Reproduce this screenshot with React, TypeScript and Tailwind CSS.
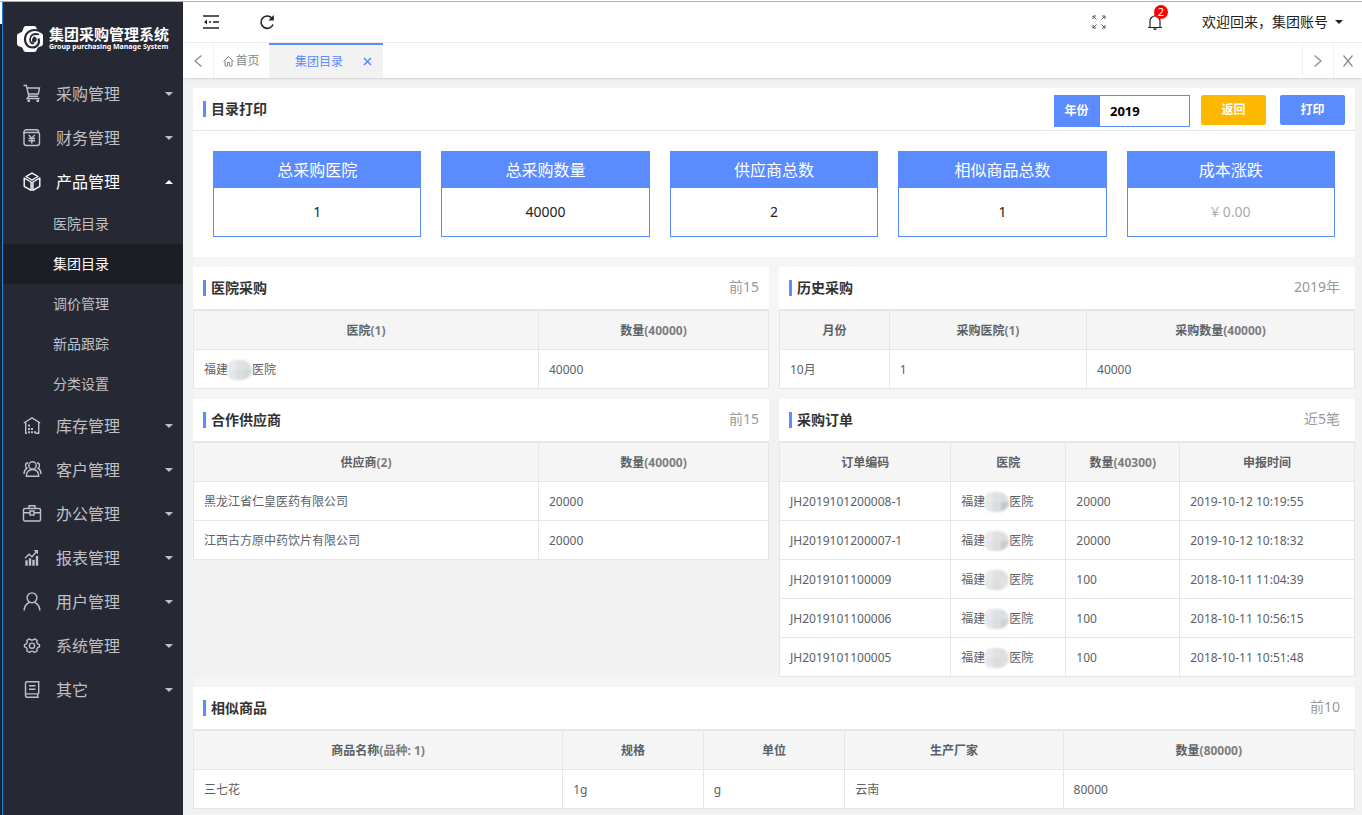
import { useState } from "react";
import type { ReactNode } from "react";

interface MenuItem {
  name: string;
  icon: ReactNode;
  children?: string[];
}

interface Column {
  title: string;
  note?: string;
  width?: string;
}

function Icon({ children }: { children: ReactNode }) {
  return (
    <svg width="20" height="20" viewBox="0 0 20 20" fill="none" stroke="currentColor" strokeWidth="1.4" className="w-5 h-5 shrink-0">
      {children}
    </svg>
  );
}

const menu: MenuItem[] = [
  {
    name: "采购管理",
    icon: (
      <Icon>
        <path d="M1.500 1.500h2.900l2.400 10.700h9.200M4.800 4h12.700l-1.200 6H6.300M6.800 12.200l-1.600 2.300h12.300" />
        <path d="M5.500 15.500h2.500V18H5.500zM14.500 15.500H17V18h-2.500z" fill="currentColor" stroke="none" />
      </Icon>
    ),
  },
  {
    name: "财务管理",
    icon: (
      <Icon>
        <path d="M2 6V4a2.300 2.300 0 0 1 2.300-2.300h10A2.300 2.300 0 0 1 16.600 4" />
        <path d="M2 4.500h13.500a2 2 0 0 1 2 2V15a2.500 2.500 0 0 1-2.500 2.500H4.500A2.500 2.500 0 0 1 2 15z" />
        <path d="M6.800 7l3 3.200L12.800 7M6.500 10.500h6.600M6.500 12.800h6.600M9.800 10.200v5.300" />
      </Icon>
    ),
  },
  {
    name: "产品管理",
    icon: (
      <Icon>
        <path d="M10 1.200l6 3.300-6 3.500-6-3.500zM2.200 6l6.900 4v8.300l-6.900-4zM17.800 6l-6.900 4v8.300l6.900-4z" strokeLinejoin="round" />
      </Icon>
    ),
    children: ["医院目录", "集团目录", "调价管理", "新品跟踪", "分类设置"],
  },
  {
    name: "库存管理",
    icon: (
      <Icon>
        <path d="M1.800 7L10 1.800 18.200 7M3.700 6v11.300M3 17.300h2M13.500 17.300h3.200V6" />
        <path d="M6 8.500h2v2H6zM6 12h2v2H6zM9 12h2v2H9zM6 15.300h2v2H6zM9 15.300h2v2H9zM12 15.300h2v2h-2z" fill="currentColor" stroke="none" />
      </Icon>
    ),
  },
  {
    name: "客户管理",
    icon: (
      <Icon>
        <circle cx="10.500" cy="5.500" r="3.700" />
        <path d="M4.300 16.300c0-4.300 2.400-6.800 6.200-6.800s6.200 2.500 6.200 6.800zM6.200 2.800C3 2.800 2.800 7 4.900 8.200 2.900 9.300 2.100 11 2 14M14.800 2.800c3.200 0 3.400 4.200 1.300 5.400 2 1.100 2.800 2.800 2.900 5.800" />
      </Icon>
    ),
  },
  {
    name: "办公管理",
    icon: (
      <Icon>
        <rect x="1.500" y="4.500" width="17" height="12.500" rx="1.500" />
        <path d="M7 4.500V1.700h6v2.800M1.500 8.700H8M12 8.700h6.500M8 7h4v4H8z" />
      </Icon>
    ),
  },
  {
    name: "报表管理",
    icon: (
      <Icon>
        <path d="M3.500 12.500h2v5h-2zM7 10.500h2v7H7zM10.500 12h2v5.500h-2zM14 8h2v9.500h-2z" fill="currentColor" strokeWidth=".4" />
        <path d="M3 10.200l4-4 3 2.500 5-5.700" />
        <path d="M11.500 2H16v4.500z" fill="currentColor" stroke="none" />
      </Icon>
    ),
  },
  {
    name: "用户管理",
    icon: (
      <Icon>
        <circle cx="10" cy="5.800" r="4.900" />
        <path d="M2.200 18.500c0-4 2-6.500 5-8M17.800 18.500c0-4-2-6.500-5-8" />
      </Icon>
    ),
  },
  {
    name: "系统管理",
    icon: (
      <Icon>
        <path d="M7.500 2.900L8.900 4h2.200l1.400-1.100 2.600 1.500-.3 1.900 1.100 1.800 1.600.5v2.200l-1.600.6-1.100 1.800.3 1.800-2.600 1.500-1.400-1.100H8.900l-1.400 1.100L4.900 15l.3-1.800-1.100-1.800-1.600-.6V8.600l1.600-.5 1.100-1.800-.3-1.900z" strokeLinejoin="round" />
        <circle cx="10" cy="9.700" r="2.600" />
      </Icon>
    ),
  },
  {
    name: "其它",
    icon: (
      <Icon>
        <path d="M16.700 13.700V1.700H5A1.500 1.500 0 0 0 3.500 3.200v12.600A1.500 1.500 0 0 0 5 17.300h11.700M3.500 15.300A1.500 1.500 0 0 1 5 13.900h11.700M15.700 14v3.300M7 5.700h6.500M7 9.200h6.500" />
      </Icon>
    ),
  },
];

const stats = [
  { label: "总采购医院", value: "1" },
  { label: "总采购数量", value: "40000" },
  { label: "供应商总数", value: "2" },
  { label: "相似商品总数", value: "1" },
  { label: "成本涨跌", value: "¥ 0.00", muted: true },
];

// Hospital name with its middle characters masked out
function Hospital({ mask = "bg-[#cfd2d6]" }: { mask?: string }) {
  return (
    <span className="inline-flex items-center">
      福建
      <span className="w-6 h-5 grid grid-cols-3 rounded-l-md rounded-r-[10px] overflow-hidden blur-[1px]">
        <span className="bg-[#e9e9ea]" />
        <span className="bg-[#dfe1e2]" />
        <span className="bg-[#dcdee1]" />
        <span className="bg-[#e4e5e6]" />
        <span className="bg-[#dadcdd]" />
        <span className={mask} />
      </span>
      医院
    </span>
  );
}

function DataTable({ columns, rows }: { columns: Column[]; rows: ReactNode[][] }) {
  return (
    <table className="w-full table-fixed border-collapse bg-white text-xs text-[#5b5f66]">
      <thead>
        <tr className="h-[39px] bg-[#f5f5f5]">
          {columns.map((col) => (
            <th key={col.title} scope="col" className={`border border-[#e6e6e6] px-2.5 pt-0.5 font-bold text-center ${col.width ?? ""}`}>
              {col.title}
              {col.note && <span className="text-[#7d7d7d]">({col.note})</span>}
            </th>
          ))}
        </tr>
      </thead>
      <tbody>
        {rows.map((row, i) => (
          <tr key={i} className="h-[39px]">
            {row.map((cell, j) => (
              <td key={j} className="border border-[#e6e6e6] px-2.5 pt-0.5 pb-0">{cell}</td>
            ))}
          </tr>
        ))}
      </tbody>
    </table>
  );
}

function PanelTitle({ title, children }: { title: string; children?: ReactNode }) {
  return (
    <div className="h-[43px] flex items-center justify-between border-b border-[#e6e6e6] bg-white px-2.5">
      <h2 className="h-4 flex items-center border-l-3 border-[#5a8bff] pl-[5px] text-sm font-bold text-[#333]">{title}</h2>
      {children}
    </div>
  );
}

interface PanelProps {
  title: string;
  extra: string;
  extraClass?: string;
  columns: Column[];
  rows: ReactNode[][];
}

function Panel({ title, extra, extraClass = "pr-[5px]", columns, rows }: PanelProps) {
  return (
    <section>
      <PanelTitle title={title}>
        <span className={`pb-0.5 text-sm text-[#999] ${extraClass}`}>{extra}</span>
      </PanelTitle>
      <DataTable columns={columns} rows={rows} />
    </section>
  );
}

function Caret({ up = false }: { up?: boolean }) {
  return (
    <svg width="8" height="4" viewBox="0 0 8 4" fill="currentColor">
      <path d={up ? "M0 4l4-4 4 4z" : "M0 0h8L4 4z"} />
    </svg>
  );
}

function Sidebar() {
  const [open, setOpen] = useState("产品管理");
  const [active, setActive] = useState("集团目录");

  return (
    <aside className="w-[180px] shrink-0 bg-[#262834] text-[#c0c1c5]">
      <div className="h-[70px] flex items-center gap-1.5 pl-3.5 pt-1 text-white">
        <svg width="26" height="26" viewBox="0 0 26 26" fill="none" className="shrink-0">
          <path d="M9 0h8q2.500 0 3 4 1.500 2.500 4 3 2 .5 2 2.500v8q0 2.500-3 3-2.500.5-3 2.500-.5 3-3 3H9q-2.500 0-3-3-.5-2-3-2.500-3-.5-3-3v-8Q0 7.500 2.500 7 5.500 6.500 6 4 6.500 0 9 0z" fill="currentColor" />
          <path d="M21.500 4.500C13 2.500 8 7 8 13.500c0 4.500 3 8 7.500 8 4.800 0 7.500-4 6-9" stroke="#262834" strokeWidth="2.200" />
          <path d="M22 8.500C16 6.800 13 10 13 13.500c0 3 2 4.300 4 3.800" stroke="#262834" strokeWidth="1.800" />
          <path d="M17 10.500c3 .5 3.500 3.500 1.500 5.500-1.500 1.200-3.500.5-3.500-1.500s1-3.200 2-4z" fill="#262834" />
        </svg>
        <div className="whitespace-nowrap">
          <p className="text-[15px] leading-4 font-bold">集团采购管理系统</p>
          <p className="text-[7px] leading-[10px] font-bold">Group purchasing Manage System</p>
        </div>
      </div>
      <nav>
        {menu.map((item) => (
          <div key={item.name}>
            <button
              onClick={() => setOpen(open === item.name ? "" : item.name)}
              className={`w-full h-11 flex items-center pl-[19px] pr-2.5 text-base ${open === item.name ? "text-white" : ""}`}
            >
              {item.icon}
              <span className="flex-1 pl-3.5 text-left">{item.name}</span>
              <Caret up={open === item.name} />
            </button>
            {open === item.name &&
              item.children?.map((child) => (
                <a
                  key={child}
                  href="#"
                  onClick={() => setActive(child)}
                  className={`h-10 flex items-center pl-[50px] text-sm ${active === child ? "bg-[#1c1e26] text-white" : ""}`}
                >
                  {child}
                </a>
              ))}
          </div>
        ))}
      </nav>
    </aside>
  );
}

function Header() {
  return (
    <header className="h-[41px] flex items-center justify-between border-b border-[#f0f0f0] bg-white text-[#222]">
      <div className="flex items-center gap-10 pl-5">
        <button aria-label="收起菜单">
          <svg width="16" height="14" viewBox="0 0 16 14" fill="none" stroke="currentColor" strokeWidth="1.500">
            <path d="M0 1h16M6 7h2M10 7h6M0 13h16" />
            <path d="M1 7l3-2.500v5z" fill="currentColor" stroke="none" />
          </svg>
        </button>
        <button aria-label="刷新">
          <svg width="16" height="16" viewBox="0 0 16 16" fill="none" stroke="currentColor" strokeWidth="1.600">
            <path d="M14 10.500A6.200 6.200 0 1 1 12.800 4" />
            <path d="M14.800 1v5.500H9.300z" fill="currentColor" stroke="none" />
          </svg>
        </button>
      </div>
      <div className="flex items-center pr-[19px]">
        <button aria-label="全屏" className="text-[#555]">
          <svg width="14" height="14" viewBox="0 0 14 14" fill="none" stroke="currentColor">
            <path d="M1 4V1h3M1 1l3.500 3.500M10 1h3v3M13 1L9.500 4.500M1 10v3h3M1 13l3.500-3.500M13 10v3h-3M13 13L9.500 9.500" />
          </svg>
        </button>
        <button aria-label="通知" className="relative ml-10">
          <svg width="18" height="18" viewBox="0 0 18 18" fill="none" stroke="currentColor" strokeWidth="1.200">
            <path d="M2 14.500h14M4 14.500V8a5 5 0 0 1 10 0v6.500M9 3V1.500M7.500 15.500q1.500 1.500 3 0" />
          </svg>
          <span className="absolute -top-2 left-2 w-3.5 h-3.5 flex items-center justify-center rounded-full bg-[#f00] text-[11px] text-white">2</span>
        </button>
        <button className="ml-[38px] flex items-center gap-[7px] text-sm">
          欢迎回来，集团账号
          <Caret />
        </button>
      </div>
    </header>
  );
}

function TabBar() {
  return (
    <div className="relative h-[35px] flex items-stretch bg-white text-xs text-[#888] shadow-sm">
      <button aria-label="向左" className="w-[31px] flex items-center justify-center border-r border-[#f0f0f0]">
        <svg width="8" height="12" viewBox="0 0 8 12" fill="none" stroke="currentColor" strokeWidth="1.200">
          <path d="M7.500.5L1 6l6.500 5.500" />
        </svg>
      </button>
      <a href="#" className="w-[55px] flex items-center justify-center gap-px">
        <svg width="11" height="12" viewBox="0 0 11 12" fill="none" stroke="currentColor">
          <path d="M.5 6.500l5-5 5 5M2 5.500v5.500h2.500V7.500h2V11H9V5.500" />
        </svg>
        首页
      </a>
      <div className="w-[114px] flex items-center border-t-2 border-[#5a8bff] bg-[#f2f2f2] text-[#5a8bff] pl-[26px]">
        <a href="#">集团目录</a>
        <button aria-label="关闭标签" className="ml-5">
          <svg width="9" height="9" viewBox="0 0 9 9" fill="none" stroke="currentColor" strokeWidth="1.600">
            <path d="M1 1l7 7M8 1L1 8" />
          </svg>
        </button>
      </div>
      <button aria-label="向右" className="ml-auto w-[31px] flex items-center justify-center border-l border-[#f0f0f0]">
        <svg width="8" height="12" viewBox="0 0 8 12" fill="none" stroke="currentColor" strokeWidth="1.200">
          <path d="M.5.5L7 6 .5 11.500" />
        </svg>
      </button>
      <button aria-label="关闭" className="w-[29px] flex items-center justify-center border-l border-[#f0f0f0]">
        <svg width="10" height="12" viewBox="0 0 10 12" fill="none" stroke="currentColor" strokeWidth="1.200">
          <path d="M.5.5l9 11M9.500.5l-9 11" />
        </svg>
      </button>
    </div>
  );
}

export default function App() {
  const [year, setYear] = useState("2019");

  return (
    <div className="min-h-screen flex flex-col bg-[#f2f2f2] font-['Noto_Sans','Noto_Sans_CJK_SC',sans-serif]">
      <div className="h-0.5 border-b border-[#b0b0b0] bg-white" />
      <div className="flex-1 flex">
        <div className="w-[3px] shrink-0 flex flex-col border-r border-[#1883d7] bg-[#1d2027]">
          <div className="h-[22px] bg-white" />
        </div>
        <Sidebar />
        <div className="flex-1 min-w-0">
          <Header />
          <TabBar />
          <main className="mt-2.5 ml-2.5 mr-[7px] mb-1.5 flex flex-col gap-2.5 bg-[#f5f5f5]">
            <section className="rounded-t-sm bg-white">
              <PanelTitle title="目录打印">
                <div className="pt-1 flex items-start text-xs font-bold">
                  <label htmlFor="year" className="h-8 w-[45px] flex items-center justify-center bg-[#5a8bff] text-white">年份</label>
                  <input
                    id="year"
                    value={year}
                    onChange={(e) => setYear(e.target.value)}
                    className="w-[91px] h-8 border border-[#5a8bff] bg-white px-2.5 text-[13px] text-black outline-none"
                  />
                  <button className="ml-[11px] w-[65px] h-[30px] rounded-xs bg-[#ffb800] text-white">返回</button>
                  <button className="ml-3.5 w-[65px] h-[30px] rounded-xs bg-[#5a8bff] text-white">打印</button>
                </div>
              </PanelTitle>
              <div className="grid grid-cols-5 gap-5 p-5">
                {stats.map((stat) => (
                  <div key={stat.label} className="border border-[#5a8bff] text-center">
                    <p className="h-9 leading-9 bg-[#5a8bff] text-base text-white">{stat.label}</p>
                    <p className={`h-12 leading-[48px] text-sm ${stat.muted ? "text-[#aaa]" : "text-[#222]"}`}>{stat.value}</p>
                  </div>
                ))}
              </div>
            </section>

            <div className="grid grid-cols-2 gap-2.5">
              <Panel
                title="医院采购"
                extra="前15"
                extraClass=""
                columns={[{ title: "医院", note: "1", width: "w-[60%]" }, { title: "数量", note: "40000" }]}
                rows={[[<Hospital mask="bg-[#d6d6d6]" />, "40000"]]}
              />
              <Panel
                title="历史采购"
                extra="2019年"
                columns={[
                  { title: "月份", width: "w-[19.1%]" },
                  { title: "采购医院", note: "1", width: "w-[34.3%]" },
                  { title: "采购数量", note: "40000" },
                ]}
                rows={[["10月", "1", "40000"]]}
              />
            </div>

            <div className="grid grid-cols-2 gap-2.5 bg-[#f1f1f1]">
              <Panel
                title="合作供应商"
                extra="前15"
                extraClass=""
                columns={[{ title: "供应商", note: "2", width: "w-[60%]" }, { title: "数量", note: "40000" }]}
                rows={[
                  ["黑龙江省仁皇医药有限公司", "20000"],
                  ["江西古方原中药饮片有限公司", "20000"],
                ]}
              />
              <Panel
                title="采购订单"
                extra="近5笔"
                columns={[
                  { title: "订单编码", width: "w-[29.8%]" },
                  { title: "医院", width: "w-[20%]" },
                  { title: "数量", note: "40300", width: "w-[19.8%]" },
                  { title: "申报时间" },
                ]}
                rows={[
                  ["JH2019101200008-1", <Hospital mask="bg-[#c3c6cb]" />, "20000", "2019-10-12 10:19:55"],
                  ["JH2019101200007-1", <Hospital mask="bg-[#c9ccd0]" />, "20000", "2019-10-12 10:18:32"],
                  ["JH2019101100009", <Hospital mask="bg-[#e2e3e5]" />, "100", "2018-10-11 11:04:39"],
                  ["JH2019101100006", <Hospital />, "100", "2018-10-11 10:56:15"],
                  ["JH2019101100005", <Hospital mask="bg-[#dcdfe1]" />, "100", "2018-10-11 10:51:48"],
                ]}
              />
            </div>

            <Panel
              title="相似商品"
              extra="前10"
              columns={[
                { title: "商品名称", note: "品种: 1", width: "w-[31.8%]" },
                { title: "规格", width: "w-[12.1%]" },
                { title: "单位", width: "w-[12.2%]" },
                { title: "生产厂家", width: "w-[18.8%]" },
                { title: "数量", note: "80000" },
              ]}
              rows={[["三七花", "1g", "g", "云南", "80000"]]}
            />
          </main>
        </div>
      </div>
    </div>
  );
}
